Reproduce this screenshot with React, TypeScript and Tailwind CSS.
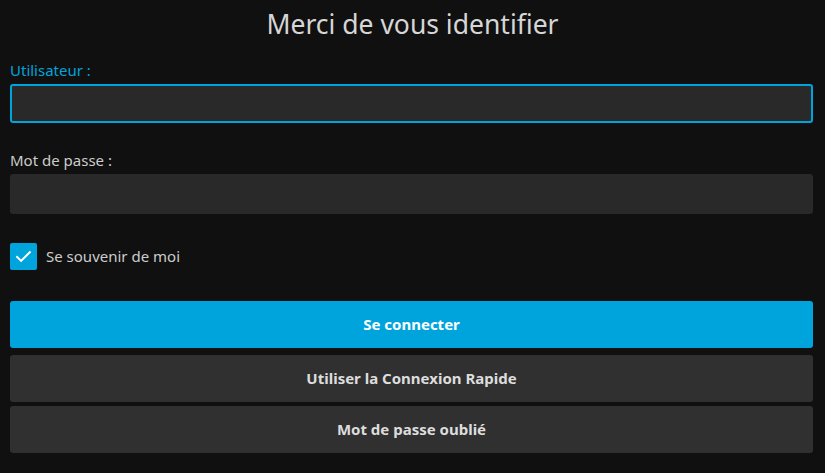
import React from "react";

export default function App() {
  return (
    <div
      className="w-[825px] h-[473px] bg-[#101010] text-[#dddddd] overflow-hidden"
      style={{ fontFamily: '"Noto Sans", sans-serif' }}
    >
      <h1 className="text-center text-[26.5px] font-normal leading-[1] pt-[11px] text-[#d6d6d6]">
        Merci de vous identifier
      </h1>
      <div className="px-[10px] pt-[22px]">
        <label className="block text-[15px] leading-[20px] text-[#00a4dc]">Utilisateur :</label>
        <div className="mt-[4px] h-[39px] w-[803px] rounded-[3px] border-2 border-[#00a4dc] bg-[#292929]" />
        <label className="block mt-[27px] text-[15px] leading-[20px] text-[#cccccc]">Mot de passe :</label>
        <div className="mt-[4px] h-[40px] w-[803px] rounded-[3px] bg-[#292929]" />
        <div className="mt-[29px] flex items-center gap-[9px]">
          <div className="w-[27px] h-[27px] rounded-[2px] bg-[#00a4dc] flex items-center justify-center">
            <svg width="19" height="19" viewBox="0 0 24 24" fill="none" stroke="white" strokeWidth="2.6" strokeLinecap="square">
              <path d="M4 12.5l5 5L20 6.5" />
            </svg>
          </div>
          <span className="text-[15px] text-[#cccccc]">Se souvenir de moi</span>
        </div>
        <div className="mt-[31px] flex flex-col">
          <button className="h-[47px] w-[803px] rounded-[3px] bg-[#00a4dc] text-white text-[15px] font-bold">
            Se connecter
          </button>
          <button className="mt-[7px] h-[47px] w-[803px] rounded-[3px] bg-[#303030] text-[#dddddd] text-[15px] font-bold">
            Utiliser la Connexion Rapide
          </button>
          <button className="mt-[4px] h-[47px] w-[803px] rounded-[3px] bg-[#303030] text-[#dddddd] text-[15px] font-bold">
            Mot de passe oublié
          </button>
        </div>
      </div>
    </div>
  );
}
